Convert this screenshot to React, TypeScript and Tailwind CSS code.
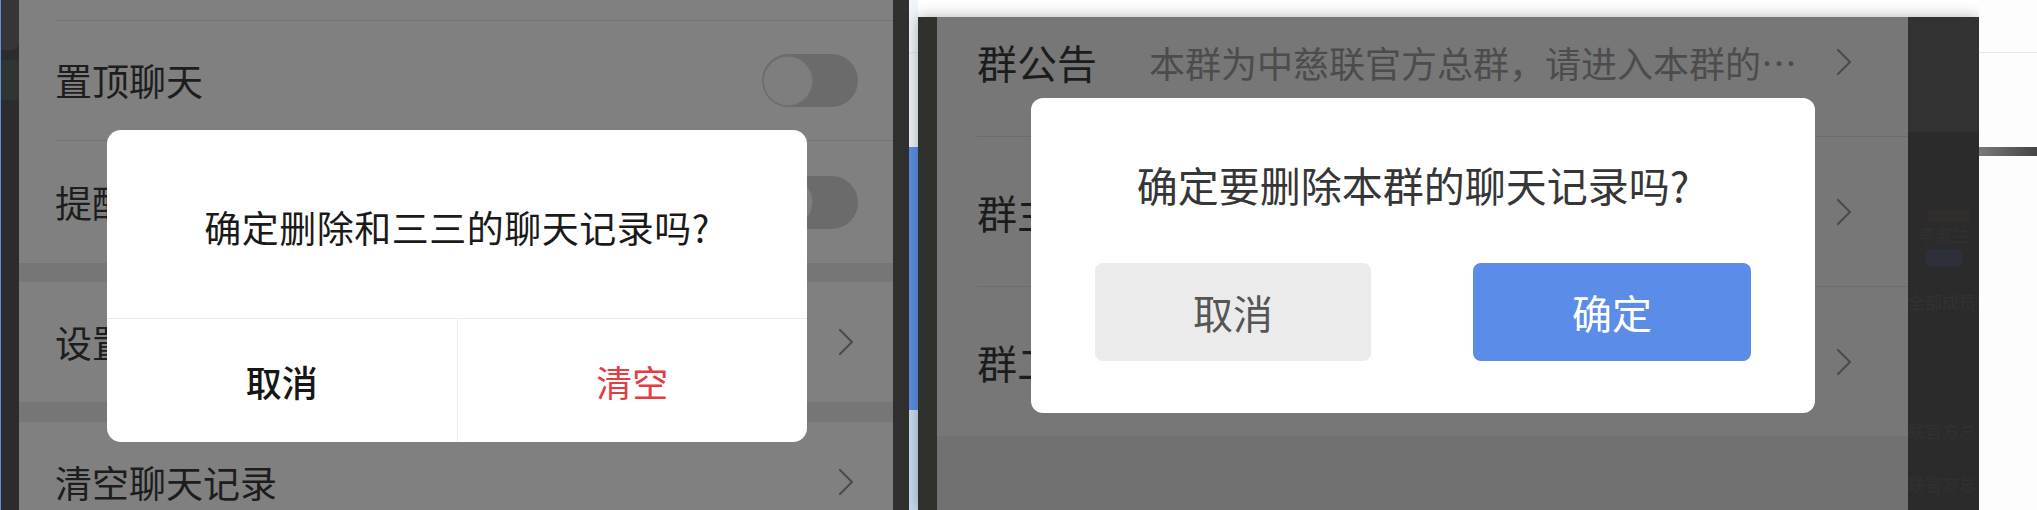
import React from 'react';

const FONT = "font-['Noto_Sans_CJK_SC','Noto_Sans',sans-serif]";

const Chevron: React.FC<{ className?: string }> = ({ className }) => (
  <svg width="18" height="28" viewBox="0 0 18 28" className={className}>
    <polyline points="3,2 15,14 3,26" fill="none" stroke="#4b4b4b" strokeWidth="2.2" strokeLinejoin="round" strokeLinecap="round" />
  </svg>
);

const Toggle = () => (
  <div className="w-[96px] h-[53px] rounded-full bg-[#6b6b6b] flex items-center">
    <div className="w-[50px] h-[50px] ml-[1px] rounded-full bg-[#7e7e7e] border border-[#727272]" />
  </div>
);

const LeftRow: React.FC<{ label: string; h: string; children?: React.ReactNode }> = ({ label, h, children }) => (
  <div className={`${h} flex items-center justify-between pl-[36px] pr-[35px]`}>
    <span className="text-[37px] leading-none text-[#1d1d1d] whitespace-nowrap">{label}</span>
    {children}
  </div>
);

const Divider: React.FC<{ inset: string; color: string }> = ({ inset, color }) => (
  <div className={`${inset} h-px ${color}`} />
);

const RightRow: React.FC<{ title: string; value?: string }> = ({ title, value }) => (
  <div className="h-[149px] flex items-center pl-[40px] pr-[55px]">
    <span className="text-[40px] leading-none text-[#1c1c1c] whitespace-nowrap">{title}</span>
    {value && (
      <span className="ml-[52px] text-[36px] leading-none text-[#4c4c4c] whitespace-nowrap">{value}</span>
    )}
    <Chevron className="ml-auto shrink-0" />
  </div>
);

export default function App() {
  return (
    <div className={`flex w-[2037px] h-[510px] overflow-hidden bg-white ${FONT}`}>
      {/* left edge strip */}
      <div className="w-[19px] h-full bg-[#2c2c2c] border-l border-[#5d8fdc] flex flex-col">
        <div className="h-[50px] bg-[#363636] rounded-br-[8px]" />
        <div className="h-[40px] mt-[10px] bg-[#2f352f]" />
      </div>

      {/* left screen */}
      <div className="relative w-[874px] h-full bg-[#808080] overflow-hidden">
        <div className="h-[20px]" />
        <Divider inset="ml-[36px]" color="bg-[#747474]" />
        <LeftRow label="置顶聊天" h="h-[119px]">
          <Toggle />
        </LeftRow>
        <Divider inset="ml-[36px]" color="bg-[#747474]" />
        <LeftRow label="提醒" h="h-[122px]">
          <Toggle />
        </LeftRow>
        <div className="h-[19px] bg-[#767676]" />
        <LeftRow label="设置" h="h-[120px]">
          <Chevron className="mr-[3px]" />
        </LeftRow>
        <div className="h-[20px] bg-[#767676]" />
        <LeftRow label="清空聊天记录" h="h-[120px]">
          <Chevron className="mr-[3px]" />
        </LeftRow>

        {/* dialog */}
        <div className="absolute left-[88px] top-[130px] w-[700px] h-[312px] bg-white rounded-[14px] flex flex-col overflow-hidden">
          <div className="h-[188px] flex items-center justify-center pt-[6px]">
            <span className="text-[37px] tracking-[0.5px] leading-none text-[#1a1a1a]">确定删除和三三的聊天记录吗?</span>
          </div>
          <div className="h-px bg-[#ececec]" />
          <div className="flex-1 flex">
            <button className="flex-1 flex items-center justify-center text-[36px] font-medium leading-none text-[#161616] border-r border-[#ececec]">
              取消
            </button>
            <button className="flex-1 flex items-center justify-center text-[36px] leading-none text-[#e33d42]">
              清空
            </button>
          </div>
        </div>
      </div>

      {/* gap strips */}
      <div className="w-[16px] h-full bg-[#30302e]" />
      <div className="w-[9px] h-full flex flex-col">
        <div className="h-[52px] bg-[#f1f4f8]" />
        <div className="h-px bg-[#dfe3e8]" />
        <div className="h-[94px] bg-[#eef2f7]" />
        <div className="h-[263px] bg-[#5b8fe3]" />
        <div className="flex-1 bg-[#c9daf1]" />
      </div>

      {/* right screenshot */}
      <div className="flex-1 h-full flex">
        <div className="w-[1061px] mt-[17px] h-[493px] flex shadow-[0_0_14px_rgba(0,0,0,0.3)]">
          <div className="w-[19px] h-full bg-[#30312c]" />

          <div className="relative w-[971px] h-full bg-[#777777] overflow-hidden">
            <div className="-mt-[30px]">
              <RightRow title="群公告" value="本群为中慈联官方总群，请进入本群的…" />
              <Divider inset="ml-[40px]" color="bg-[#6c6c6c]" />
              <RightRow title="群主" />
              <Divider inset="ml-[40px]" color="bg-[#6c6c6c]" />
              <RightRow title="群二" />
              <div className="h-[100px] bg-[#717171]" />
            </div>

            {/* dialog */}
            <div className="absolute left-[94px] top-[81px] w-[784px] h-[315px] bg-white rounded-[12px] flex flex-col items-center">
              <div className="mt-[66px] text-[41px] leading-none text-[#363636] pr-[20px]">确定要删除本群的聊天记录吗?</div>
              <div className="mt-[58px] w-full flex justify-between px-[64px]">
                <button className="w-[276px] h-[98px] rounded-[8px] bg-[#ebebeb] text-[40px] leading-none text-[#555555]">取消</button>
                <button className="w-[278px] h-[98px] rounded-[8px] bg-[#5b8ce8] text-[40px] leading-none text-white">确定</button>
              </div>
            </div>
          </div>

          <div className="w-[71px] h-full flex flex-col overflow-hidden">
            <div className="h-[115px] bg-[#323232]" />
            <div className="flex-1 bg-[#2b2b2b] flex flex-col items-center">
              <div className="mt-[78px] ml-[10px] w-[42px] h-[12px] bg-[#322d2d]" />
              <span className="mt-[4px] text-[17px] leading-none text-[#313131] whitespace-nowrap">李淑兰</span>
              <div className="mt-[6px] w-[36px] h-[18px] rounded-[3px] bg-[#2d3038]" />
              <span className="mt-[26px] self-start text-[17px] leading-none text-[#323232] whitespace-nowrap">全部成员(2</span>
              <span className="mt-[112px] self-start text-[17px] leading-none text-[#313131] whitespace-nowrap">联官方总</span>
              <span className="mt-[36px] self-start text-[17px] leading-none text-[#313131] whitespace-nowrap">联官方总</span>
            </div>
          </div>
        </div>

        <div className="flex-1 h-full flex flex-col bg-[#fdfdfd]">
          <div className="h-[52px]" />
          <div className="h-px bg-[#e5e5e5]" />
          <div className="h-[94px]" />
          <div className="h-[9px] bg-gradient-to-r from-[#7a7a7a] to-[#454545]" />
        </div>
      </div>
    </div>
  );
}
